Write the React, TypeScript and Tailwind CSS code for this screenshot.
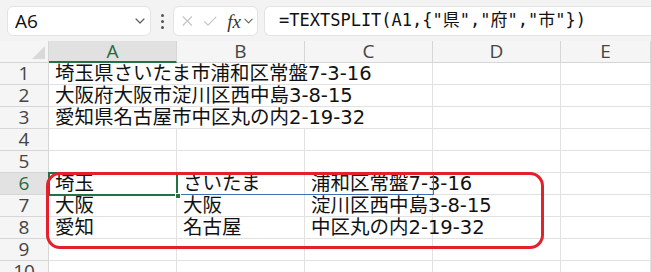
import React from 'react';

const cols = ['A', 'B', 'C', 'D', 'E'];
const colW = ['w-[128px]', 'w-[128px]', 'w-[128px]', 'w-[128px]', 'flex-1'];

const jp = { fontFamily: '"DejaVu Sans", "Noto Sans CJK JP", sans-serif' };
const ui = { fontFamily: '"Open Sans", "Noto Sans", sans-serif' };

const Chevron = ({ className }: { className?: string }) => (
  <svg className={className} width="10" height="6" viewBox="0 0 10 6" fill="none">
    <path d="M1 1l4 4 4-4" stroke="#606060" strokeWidth="1.2" strokeLinecap="round" strokeLinejoin="round" />
  </svg>
);

export default function App() {
  const addresses = [
    '埼玉県さいたま市浦和区常盤7-3-16',
    '大阪府大阪市淀川区西中島3-8-15',
    '愛知県名古屋市中区丸の内2-19-32',
  ];
  const split = [
    ['埼玉', 'さいたま', '浦和区常盤7-3-16'],
    ['大阪', '大阪', '淀川区西中島3-8-15'],
    ['愛知', '名古屋', '中区丸の内2-19-32'],
  ];

  const rowHeader = (n: number, active = false) => (
    <div
      className={`w-[49px] shrink-0 h-[22px] flex items-center justify-center border-r border-b border-[#d6d6d6] text-[19px] leading-[21px] ${
        active ? 'bg-[#e2e2e2] text-[#1e6b3f]' : 'bg-[#f5f5f5] text-[#444]'
      }`}
      style={ui}
    >
      {n}
    </div>
  );

  const cell = (key: string, w: string, text?: string) => (
    <div
      key={key}
      className={`${w} shrink-0 h-[22px] border-r border-b border-[#e1e1e1] pl-[6px] overflow-visible whitespace-nowrap text-[19.5px] leading-[22px] text-[#111]`}
      style={jp}
    >
      {text}
    </div>
  );

  return (
    <div className="w-[651px] h-[272px] overflow-hidden bg-white">
      {/* 数式バー */}
      <div className="h-[41px] bg-[#f3f3f3] flex items-center pt-[1px]">
        <div className="ml-[7px] w-[144px] h-[30px] bg-white rounded-md border border-[#e3e3e3] flex items-center justify-between pl-[7px] pr-[5px]">
          <span className="text-[19px] text-[#111]" style={ui}>A6</span>
          <Chevron />
        </div>
        <div className="w-[22px] flex flex-col items-center gap-[3px]">
          <span className="w-[3px] h-[3px] rounded-full bg-[#555]" />
          <span className="w-[3px] h-[3px] rounded-full bg-[#555]" />
          <span className="w-[3px] h-[3px] rounded-full bg-[#555]" />
        </div>
        <div className="w-[85px] h-[30px] bg-white rounded-md border border-[#e3e3e3] flex items-center pl-[6px] pr-[4px]">
          <svg width="14" height="14" viewBox="0 0 14 14" className="ml-[1px]">
            <path d="M2 2l10 10M12 2L2 12" stroke="#c4c4c4" strokeWidth="1.3" />
          </svg>
          <svg width="16" height="14" viewBox="0 0 16 14" className="ml-[9px]">
            <path d="M1.5 7.5l4 4 9-9" stroke="#c4c4c4" strokeWidth="1.3" fill="none" />
          </svg>
          <span className="ml-[10px] text-[19px] italic text-[#333] leading-none" style={{ fontFamily: '"Liberation Serif", serif' }}>fx</span>
          <Chevron className="ml-[3px]" />
        </div>
        <div
          className="ml-[6px] flex-1 h-[30px] bg-white rounded-l-md border border-r-0 border-[#e3e3e3] flex items-center pl-[14px] text-[17px] text-[#111] whitespace-nowrap"
          style={{ fontFamily: '"DejaVu Sans Mono", "Noto Sans CJK JP", monospace' }}
        >
          =TEXTSPLIT(A1,{'{'}"県","府","市"{'}'})
        </div>
      </div>

      {/* シート */}
      <div className="relative">
        {/* 列見出し */}
        <div className="flex h-[22px]">
          <div className="w-[49px] shrink-0 bg-[#f5f5f5] border-r border-b border-[#d6d6d6] flex items-end justify-end pr-[3px] pb-[3px]">
            <svg width="13" height="13" viewBox="0 0 13 13">
              <path d="M13 0V13H0Z" fill="#d9d9d9" />
            </svg>
          </div>
          {cols.map((c, i) => (
            <div
              key={c}
              className={`${colW[i]} shrink-0 flex items-center justify-center text-[19px] leading-none border-r border-[#d6d6d6] ${
                i === 0 ? 'bg-[#e1e1e1] text-[#1e6b3f] border-b-2 border-b-[#217346]' : 'bg-[#f5f5f5] text-[#444] border-b border-b-[#d6d6d6]'
              }`}
              style={ui}
            >
              {c}
            </div>
          ))}
        </div>

        {/* 1-3行 */}
        {addresses.map((a, r) => (
          <div key={a} className="flex">
            {rowHeader(r + 1)}
            {cell(`a${r}`, 'w-[384px]', a)}
            {cell(`d${r}`, 'w-[128px]')}
            {cell(`e${r}`, 'flex-1')}
          </div>
        ))}
        {[4, 5].map((n) => (
          <div key={n} className="flex">
            {rowHeader(n)}
            {cols.map((c, i) => cell(`${c}${n}`, colW[i]))}
          </div>
        ))}
        {split.map((row, r) => (
          <div key={r} className="flex">
            {rowHeader(r + 6, r === 0)}
            {row.map((t, i) => cell(`s${r}${i}`, colW[i], t))}
            {cell(`d${r + 6}`, colW[3])}
            {cell(`e${r + 6}`, colW[4])}
          </div>
        ))}
        {[9, 10].map((n) => (
          <div key={n} className="flex">
            {rowHeader(n)}
            {cols.map((c, i) => cell(`${c}${n}`, colW[i]))}
          </div>
        ))}

        {/* スピル範囲 */}
        <div className="absolute left-[177px] top-[131px] w-[257px] h-[23px] border-r border-b border-[#3e6fb6]" />
        {/* アクティブセル */}
        <div className="absolute left-[48px] top-[131px] w-[130px] h-[24px] border-2 border-[#217346]" />
        <div className="absolute left-[175px] top-[152px] w-[6px] h-[6px] bg-[#217346] border border-white" />
        {/* 赤枠 */}
        <div className="absolute left-[46px] top-[131px] w-[498px] h-[77px] border-[3.5px] border-[#e3202b] rounded-[14px]" />
      </div>
    </div>
  );
}
